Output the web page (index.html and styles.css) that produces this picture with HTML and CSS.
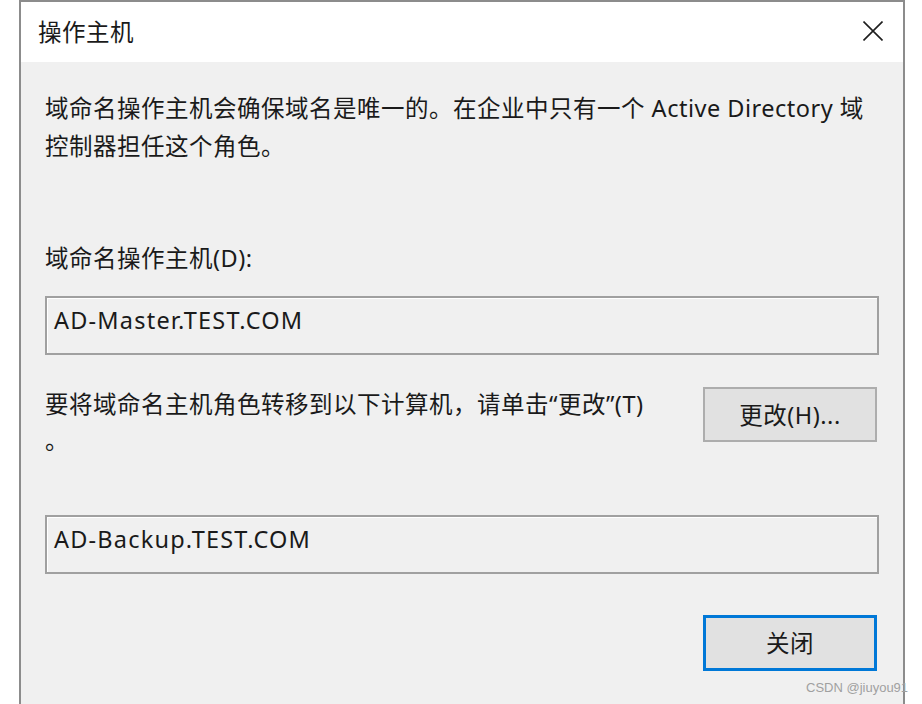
FILE: index.html
```html
<!DOCTYPE html>
<html lang="zh-CN">
<head>
<meta charset="utf-8">
<title>操作主机</title>
<link rel="stylesheet" href="styles.css">
</head>
<body>
<div class="window">
  <div class="titlebar">
    <span class="title">操作主机</span>
    <span class="close" aria-label="关闭">
      <svg width="20" height="20" viewBox="0 0 20 20"><path d="M0.5 0.5 L19.5 19.5 M19.5 0.5 L0.5 19.5" stroke="#1e1e1e" stroke-width="1.6" fill="none"/></svg>
    </span>
  </div>
  <div class="content">
    <p class="intro">域命名操作主机会确保域名是唯一的。在企业中只有一个 Active Directory 域<br>控制器担任这个角色。</p>
    <div class="label">域命名操作主机(D):</div>
    <div class="field">AD-Master.TEST.COM</div>
    <div class="row">
      <div class="hint">要将域命名主机角色转移到以下计算机，请单击“更改”(T)<br>。</div>
      <button class="btn">更改(H)...</button>
    </div>
    <div class="field field-second">AD-Backup.TEST.COM</div>
    <div class="footer">
      <button class="btn btn-default">关闭</button>
    </div>
  </div>
</div>
<div class="watermark">CSDN @jiuyou91</div>
</body>
</html>
```
FILE: styles.css
```css
html, body {
  margin: 0;
  padding: 0;
  background: #ffffff;
  height: 704px;
  overflow: hidden;
}
body {
  font-family: "Noto Sans", "Noto Sans CJK SC", sans-serif;
  font-size: 23.5px;
  letter-spacing: 0.5px;
  color: #1a1a1a;
  position: relative;
}
.window {
  margin-left: 19px;
  width: 882px;
  height: 720px;
  border: 2px solid #8c8c8c;
  border-bottom: none;
  background: #f0f0f0;
}
.titlebar {
  height: 60px;
  background: #ffffff;
  display: flex;
  align-items: center;
  justify-content: space-between;
  padding: 0 20px 0 17px;
}
.title {
  line-height: 30px;
}
.close {
  display: flex;
  width: 20px;
  height: 20px;
  margin-top: -2px;
}
.content {
  padding: 27px 24px 0 24px;
}
.intro {
  margin: 0;
  line-height: 38px;
  white-space: nowrap;
}
.label {
  margin-top: 74px;
  line-height: 38px;
}
.field {
  margin-top: 19px;
  height: 52px;
  border: 2px solid #a0a0a0;
  box-shadow: inset 1px 1px 0 #ffffff;
  padding: 3px 0 0 7px;
  line-height: 38px;
  letter-spacing: 1.2px;
}
.row {
  margin-top: 31px;
  display: flex;
  justify-content: space-between;
  align-items: flex-start;
  padding-right: 2px;
}
.hint {
  line-height: 36px;
  white-space: nowrap;
}
.btn {
  font: inherit;
  letter-spacing: inherit;
  color: inherit;
  width: 174px;
  height: 55px;
  margin-top: 1px;
  background: #e1e1e1;
  border: 2px solid #adadad;
  padding: 0;
  line-height: 30px;
}
.field-second {
  margin-top: 57px;
}
.footer {
  margin-top: 41px;
  display: flex;
  justify-content: flex-end;
  padding-right: 2px;
}
.btn-default {
  height: 56px;
  margin-top: 0;
  border: 3px solid #0078d7;
}
.watermark {
  position: absolute;
  left: 806px;
  top: 680px;
  font-family: "Liberation Sans", sans-serif;
  font-size: 13px;
  letter-spacing: 0;
  color: #a0a0a0;
}
```
